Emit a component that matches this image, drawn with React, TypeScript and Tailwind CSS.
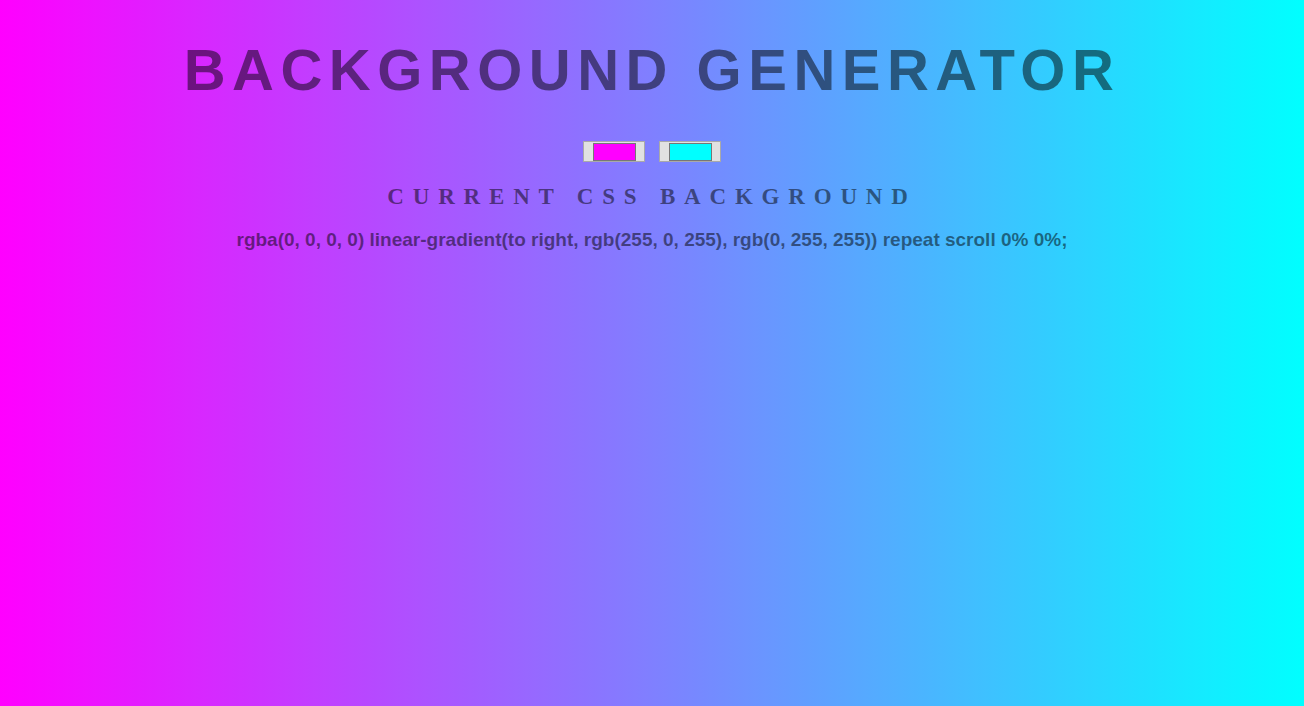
const ColorSwatch = ({ color }: { color: string }) => (
  <div className="flex h-[21px] w-[62px] items-center justify-center border border-[#a9a9a9] bg-[#e1e1e1]">
    <div
      className="h-[18px] w-[43px] border border-[#777777]"
      style={{ backgroundColor: color }}
    ></div>
  </div>
);

const App = () => {
  const first = "#ff00ff";
  const second = "#00ffff";

  return (
    <div className="min-h-screen bg-[linear-gradient(to_right,#ff00ff,#00ffff)] pt-[37px] text-center text-black/50">
      <h1 className="font-['Liberation_Sans',Arial,sans-serif] text-[58px] leading-[66px] font-bold tracking-[6.5px] uppercase">
        Background Generator
      </h1>
      <div className="mt-[38px] flex justify-center gap-[14px]">
        <ColorSwatch color={first} />
        <ColorSwatch color={second} />
      </div>
      <h3 className="mt-[22px] font-['Liberation_Serif','Times_New_Roman',serif] text-[23px] leading-[26px] font-bold tracking-[8.8px] uppercase">
        Current CSS Background
      </h3>
      <p className="mt-[19px] font-['Liberation_Sans',Arial,sans-serif] text-[19px] leading-[22px] font-bold">
        rgba(0, 0, 0, 0) linear-gradient(to right, rgb(255, 0, 255), rgb(0,
        255, 255)) repeat scroll 0% 0%;
      </p>
    </div>
  );
};

export default App;
